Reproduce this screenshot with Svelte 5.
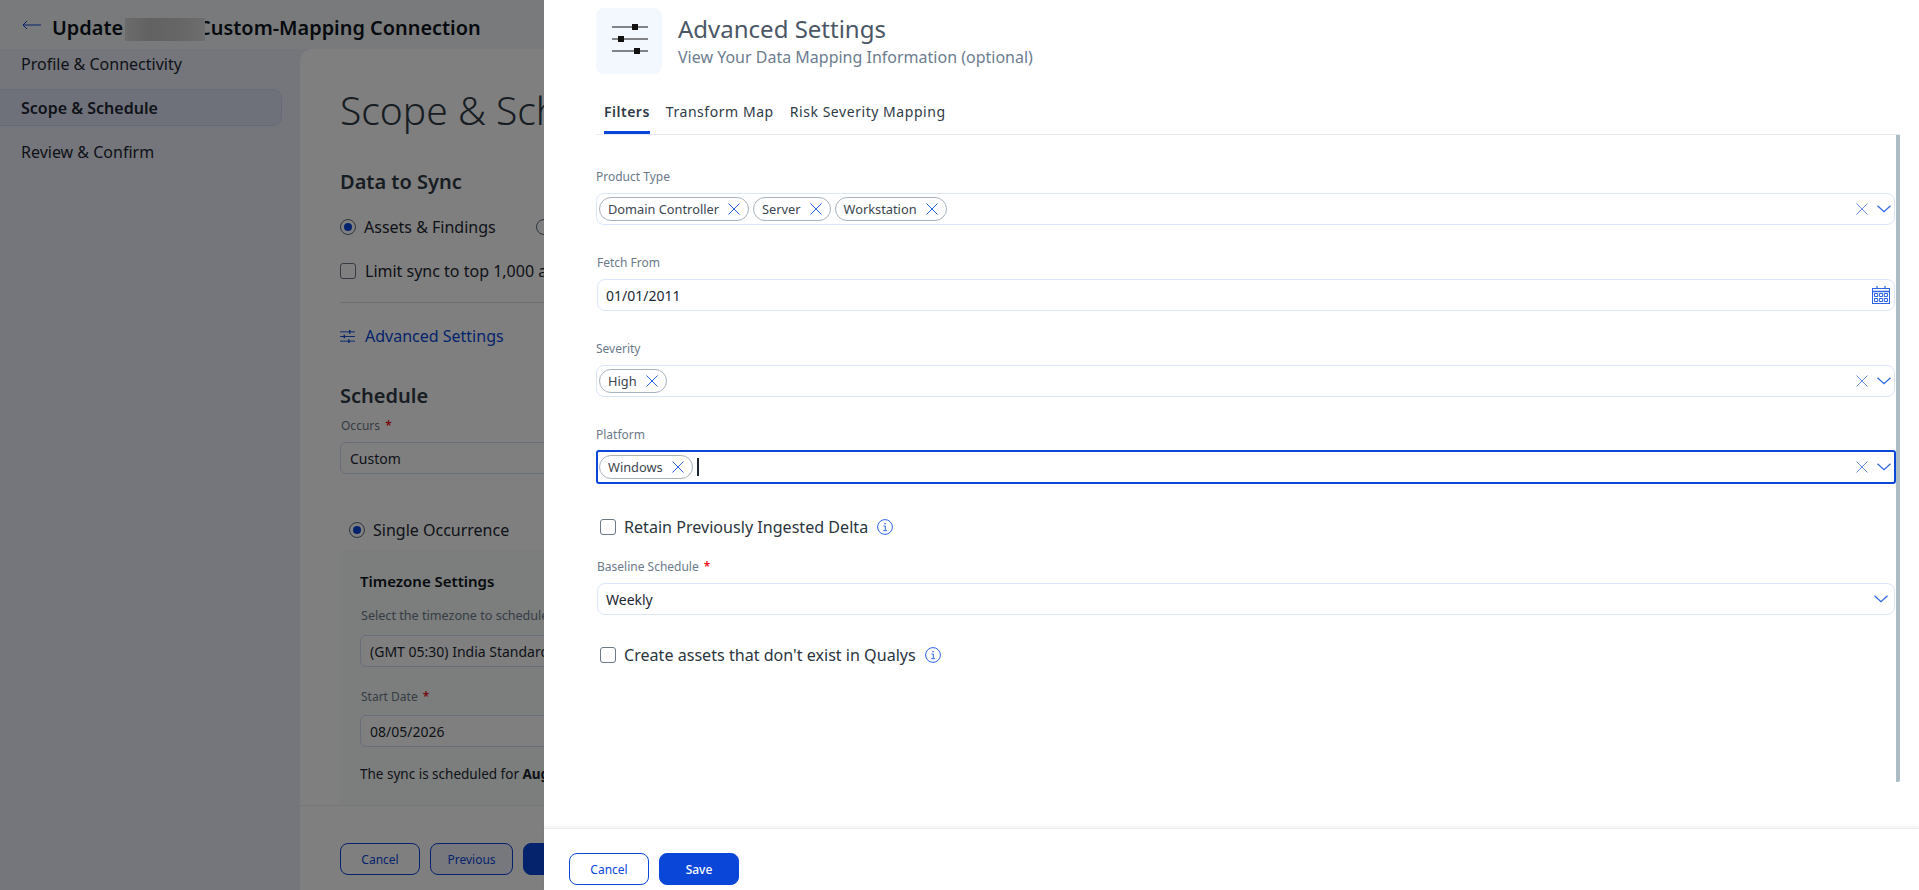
<script>
  const steps = [
    { label: "Profile & Connectivity" },
    { label: "Scope & Schedule", active: true },
    { label: "Review & Confirm" },
  ];
  const tabs = ["Filters", "Transform Map", "Risk Severity Mapping"];
</script>

{#snippet cross(cls = "")}
  <svg class="x {cls}" viewBox="0 0 12 12" width="12" height="12" fill="none" stroke="currentColor" stroke-width="1"><path d="M.5.5l11 11M11.5.5l-11 11" /></svg>
{/snippet}

{#snippet chevron()}
  <svg class="chev" viewBox="0 0 14 8" width="14" height="8" fill="none" stroke="currentColor" stroke-width="1.2"><path d="M.5.8L7 6.8 13.500.8" /></svg>
{/snippet}

{#snippet info()}
  <svg class="info" viewBox="0 0 16 16" width="16" height="16" fill="none" stroke="currentColor"><circle cx="8" cy="8" r="7.400" /><path d="M6.500 7h1.800v4.500M6.300 11.700h3.800" /><circle cx="8" cy="4.700" r=".8" fill="currentColor" stroke="none" /></svg>
{/snippet}

{#snippet chip(text)}
  <span class="chip">{text}{@render cross()}</span>
{/snippet}

{#snippet tools()}
  <span class="tools">{@render cross("clear")}{@render chevron()}</span>
{/snippet}

<div class="page">
  <header>
    <svg class="back" viewBox="0 0 20 12" width="20" height="12" fill="none" stroke="currentColor" stroke-width="1"><path d="M19 6H1M5 2L1 6l4 4" /></svg>
    <h1>Update<span class="redacted"></span>Custom-Mapping Connection</h1>
  </header>

  <div class="body">
    <aside>
      {#each steps as s}
        <div class="step" class:active={s.active}>{s.label}</div>
      {/each}
    </aside>

    <main>
      <div class="scroll">
        <h2>Scope &amp; Schedule</h2>
        <h3>Data to Sync</h3>
        <div class="options">
          <label class="radio"><span class="dot on"></span>Assets &amp; Findings</label>
          <label class="radio"><span class="dot"></span>Assets Only</label>
        </div>
        <label class="limit"><span class="box"></span>Limit sync to top 1,000 assets</label>
        <hr />
        <div class="adv">
          <svg viewBox="0 0 16 14" width="15" height="13" fill="none" stroke="currentColor"><path d="M0 2h16M0 7h16M0 12h16" /><path d="M10.500 0v4M4.500 5v4M9.500 10v4" stroke-width="1.500" /></svg>
          Advanced Settings
        </div>
        <h3 class="sched">Schedule</h3>
        <div class="mini occurs">Occurs <b>*</b></div>
        <div class="field">Custom</div>
        <label class="radio single"><span class="dot on"></span>Single Occurrence</label>
        <section class="tz">
          <h4>Timezone Settings</h4>
          <div class="mini hint">Select the timezone to schedule the sync</div>
          <div class="field">(GMT 05:30) India Standard Time</div>
          <div class="mini start">Start Date <b>*</b></div>
          <div class="field">08/05/2026</div>
          <p>The sync is scheduled for <strong>August 5, 2026</strong></p>
        </section>
      </div>
      <footer>
        <button class="ghost">Cancel</button>
        <button class="ghost tint">Previous</button>
        <button class="solid">Next</button>
      </footer>
    </main>
  </div>

  <div class="backdrop"></div>

  <div class="drawer">
    <div class="head">
      <div class="tile">
        <svg viewBox="0 0 36 30" width="36" height="30" fill="#111" stroke="none"><path d="M0 2.400h36v1.200H0zM0 14.400h36v1.200H0zM0 26.400h36v1.200H0z" /><rect x="20" y="0" width="6" height="6" /><rect x="6" y="12" width="6" height="6" /><rect x="22" y="24" width="6" height="6" /></svg>
      </div>
      <div>
        <div class="title">Advanced Settings</div>
        <div class="sub">View Your Data Mapping Information (optional)</div>
      </div>
    </div>

    <nav>
      {#each tabs as t, i}
        <span class="tab" class:current={i === 0}>{t}</span>
      {/each}
    </nav>

    <div class="form">
      <div class="lab">Product Type</div>
      <div class="input multi">
        {@render chip("Domain Controller")}
        {@render chip("Server")}
        {@render chip("Workstation")}
        {@render tools()}
      </div>

      <div class="lab shift">Fetch From</div>
      <div class="input plain shift">
        01/01/2011
        <svg class="cal" viewBox="0 0 18 18" width="18" height="18" fill="none" stroke="currentColor"><rect x=".5" y="2.500" width="17" height="15" /><path d="M0 5.500h18" stroke-width="1.500" /><path d="M5 0v2.500M13 0v2.500" opacity=".6" stroke-width="2" /><path d="M2.500 7.500h3.200v3h-3.200zM7.400 7.500h3.200v3H7.400zM12.300 7.500h3.200v3h-3.200zM2.500 12.500h3.200v3h-3.200zM7.400 12.500h3.200v3H7.400zM12.300 12.500h3.200v3h-3.200z" /></svg>
      </div>

      <div class="lab">Severity</div>
      <div class="input multi">
        {@render chip("High")}
        {@render tools()}
      </div>

      <div class="lab">Platform</div>
      <div class="input multi focus">
        {@render chip("Windows")}
        <span class="caret"></span>
        {@render tools()}
      </div>

      <div class="check first">
        <span class="box"></span>Retain Previously Ingested Delta {@render info()}
      </div>

      <div class="lab shift base">Baseline Schedule <b>*</b></div>
      <div class="input plain shift">
        Weekly
        {@render chevron()}
      </div>

      <div class="check last">
        <span class="box"></span>Create assets that don't exist in Qualys {@render info()}
      </div>
    </div>

    <div class="actions">
      <button class="ghost">Cancel</button>
      <button class="solid">Save</button>
    </div>
  </div>
</div>

<style>
  :global(body) {
    margin: 0;
    font-family: "Noto Sans", sans-serif;
    color: #1c2733;
  }
  .page {
    position: relative;
    height: 890px;
    overflow: hidden;
    display: flex;
    flex-direction: column;
    background: #e9ecf6;
  }
  header {
    height: 49px;
    box-sizing: border-box;
    padding: 5px 0 0 22px;
    display: flex;
    align-items: center;
    gap: 10px;
    background: #f3f5f8;
    flex: none;
  }
  .back {
    color: #0a47d9;
    margin-top: -5px;
  }
  h1 {
    margin: 0;
    font-size: 19.900px;
    font-weight: 600;
    color: #0c1520;
    white-space: nowrap;
  }
  .redacted {
    display: inline-block;
    width: 80px;
    height: 23px;
    margin: 0 -7px 0 2px;
    vertical-align: -6px;
    position: relative;
    background: linear-gradient(90deg, #d8d8d8, #c4c4c4 30%, #cdcdcd 70%, #dcdcdc);
  }
  .body {
    flex: 1;
    display: flex;
    min-height: 0;
  }
  aside {
    width: 300px;
    flex: none;
    box-sizing: border-box;
    padding: 0 18px 0 0;
  }
  .step {
    height: 30px;
    line-height: 30px;
    padding-left: 21px;
    font-size: 16px;
  }
  .step:first-child {
    height: 40px;
  }
  .step.active {
    height: 37px;
    font-weight: 600;
    line-height: 36px;
    background: #dde2f2;
    border: 1px solid #d0d7ee;
    border-left: 0;
    border-radius: 0 9px 9px 0;
    box-sizing: border-box;
    margin-bottom: 11px;
  }
  main {
    flex: 1;
    background: #fff;
    border-radius: 12px 0 0 0;
    display: flex;
    flex-direction: column;
    min-width: 0;
  }
  .scroll {
    flex: 1;
    min-height: 0;
    overflow: hidden;
    padding-left: 40px;
  }
  h2 {
    margin: 32px 0 0;
    font-size: 39px;
    line-height: 58px;
    font-weight: 300;
    color: #2f3b47;
    white-space: nowrap;
  }
  h3 {
    margin: 30px 0 0;
    font-size: 20px;
    line-height: 25px;
    font-weight: 600;
    color: #2f3b47;
  }
  .options {
    display: flex;
    gap: 40px;
    margin-top: 23px;
  }
  .radio {
    display: flex;
    align-items: center;
    gap: 8px;
    font-size: 16px;
    line-height: 20px;
  }
  .dot {
    width: 16px;
    height: 16px;
    border: 1px solid #5c6b7a;
    border-radius: 50%;
    box-sizing: border-box;
    background: #fff;
    position: relative;
    flex: none;
  }
  .dot.on::after {
    content: "";
    position: absolute;
    inset: 3px;
    border-radius: 50%;
    background: #0a47d9;
  }
  .limit {
    display: flex;
    align-items: center;
    gap: 9px;
    font-size: 16px;
    line-height: 20px;
    margin-top: 24px;
  }
  .box {
    width: 16px;
    height: 16px;
    box-sizing: border-box;
    border: 1px solid #6c7985;
    border-radius: 3px;
    background: #fff;
    flex: none;
  }
  hr {
    margin: 21px 0 0;
    border: 0;
    border-top: 1px solid #d8dce2;
  }
  .adv {
    display: flex;
    align-items: center;
    gap: 10px;
    color: #0a47d9;
    font-size: 16px;
    line-height: 20px;
    margin-top: 23px;
  }
  .sched {
    margin-top: 37px;
  }
  .mini {
    font-size: 12px;
    line-height: 16px;
    color: #6b7a8a;
  }
  .mini b,
  .base b {
    color: #f01010;
    font-weight: 600;
    margin-left: 2px;
  }
  .occurs {
    margin: 10px 0 0 1px;
  }
  .hint {
    font-size: 12.600px;
    margin-left: 1px;
  }
  .field {
    height: 32px;
    box-sizing: border-box;
    border: 1px solid #d3dcf6;
    border-radius: 6px;
    background: #fff;
    padding-left: 9px;
    font-size: 14px;
    line-height: 31px;
    margin-top: 8px;
  }
  .tz .field {
    margin-top: 11px;
  }
  .tz .start + .field {
    margin-top: 10px;
  }
  .single {
    margin: 46px 0 0 9px;
  }
  .tz {
    margin-top: 10px;
    padding: 21px 20px 0;
    background: #f8fbfa;
    height: 260px;
    box-sizing: border-box;
  }
  h4 {
    margin: 0 0 17px;
    font-size: 15px;
    line-height: 20px;
    font-weight: 600;
    color: #0c1520;
  }
  .start {
    margin-top: 22px;
    margin-left: 1px;
  }
  .tz p {
    margin: 18px 0 0;
    font-size: 13.500px;
    line-height: 18px;
    white-space: nowrap;
  }
  main footer {
    height: 85px;
    flex: none;
    box-sizing: border-box;
    padding: 37px 0 0 40px;
    display: flex;
    gap: 10px;
    align-items: flex-start;
    background: #fff;
    border-top: 1px solid #eceef0;
  }
  button {
    height: 32px;
    border-radius: 8px;
    font: 400 12px "Noto Sans", sans-serif;
    padding: 0;
    width: 80px;
    box-sizing: border-box;
  }
  .ghost {
    background: #fff;
    color: #0a47d9;
    border: 1px solid #0a47d9;
  }
  .ghost.tint {
    background: #eef1fb;
    width: 83px;
  }
  .solid {
    background: #0a47d9;
    color: #fff;
    border: 1px solid #0a47d9;
    font-weight: 500;
  }
  .backdrop {
    position: absolute;
    inset: 0;
    background: rgba(0, 0, 0, 0.5);
  }
  .drawer {
    position: absolute;
    top: 0;
    right: 0;
    bottom: 0;
    width: 1375px;
    background: #fff;
    display: flex;
    flex-direction: column;
    box-sizing: border-box;
    padding-left: 52px;
  }
  .head {
    display: flex;
    gap: 16px;
    padding-top: 8px;
    height: 66px;
    flex: none;
  }
  .tile {
    width: 66px;
    height: 66px;
    border-radius: 8px;
    background: #f3f7fe;
    display: flex;
    align-items: center;
    justify-content: center;
  }
  .tile svg {
    margin: 0 0 4px 2px;
  }
  .title {
    font-size: 24px;
    line-height: 32px;
    margin-top: 5px;
    color: #4b5767;
  }
  .sub {
    font-size: 16px;
    line-height: 20px;
    margin-top: 2px;
    color: #6d7d8f;
  }
  nav {
    margin-top: 24px;
    height: 37px;
    width: 1304px;
    box-sizing: border-box;
    border-bottom: 1px solid #e6e9ee;
    display: flex;
    gap: 16px;
    padding-left: 8px;
    flex: none;
  }
  .tab {
    height: 36px;
    box-sizing: border-box;
    font-size: 14px;
    line-height: 28px;
    letter-spacing: 0.55px;
    color: #2f3b47;
  }
  .tab.current {
    font-weight: 600;
    letter-spacing: 0.5px;
    border-bottom: 3px solid #0a47d9;
  }
  .form {
    flex: 1;
    min-height: 0;
    width: 1304px;
    box-sizing: border-box;
    border-right: 4px solid #aebcc6;
    border-radius: 0 0 2px 0;
    padding: 34px 1px 0 0;
    margin-bottom: 46px;
  }
  .lab {
    font-size: 12px;
    line-height: 16px;
    color: #6b7a8a;
    margin-bottom: 8px;
  }
  .shift {
    margin-left: 1px;
  }
  .input {
    height: 32px;
    box-sizing: border-box;
    border: 1px solid #dbe5fb;
    border-radius: 8px;
    background: #fff;
    display: flex;
    align-items: center;
    margin-bottom: 30px;
    color: #1c2733;
    font-size: 14px;
  }
  .multi {
    gap: 4px;
    padding-left: 2px;
  }
  .plain {
    padding-left: 8px;
    justify-content: space-between;
    padding-right: 6px;
    margin-bottom: 0;
  }
  .plain + .lab {
    margin-top: 30px;
  }
  .chip {
    height: 24px;
    box-sizing: border-box;
    border: 1px solid #a9b2bd;
    border-radius: 12px;
    display: inline-flex;
    align-items: center;
    gap: 9px;
    padding: 0 8px 0 8px;
    font-size: 12.800px;
    color: #3b4650;
  }
  .x,
  .chev,
  .info,
  .cal {
    color: #2a63e4;
    flex: none;
  }
  .cal {
    margin-right: -2px;
  }
  .tools {
    margin-left: auto;
    display: flex;
    align-items: center;
    gap: 9px;
    padding-right: 3px;
  }
  .clear {
    opacity: 0.7;
  }
  .focus {
    height: 34px;
    border: 2px solid #0a47d9;
    border-radius: 3px;
    padding-left: 1px;
    margin: -1px -1px 1px 0;
  }
  .focus .tools {
    padding-right: 3px;
  }
  .caret {
    width: 2px;
    height: 18px;
    background: #1c2733;
  }
  .check {
    display: flex;
    align-items: center;
    gap: 8px;
    font-size: 16.100px;
    line-height: 22px;
    margin-left: 4px;
    color: #2b3640;
  }
  .check .info {
    margin-left: 1px;
  }
  .first {
    margin-top: 32px;
  }
  .base {
    margin-top: 21px;
  }
  .last {
    margin-top: 29px;
  }
  .actions {
    height: 62px;
    flex: none;
    margin-left: -52px;
    padding: 24px 0 0 25px;
    box-sizing: border-box;
    display: flex;
    gap: 10px;
    align-items: flex-start;
    border-top: 1px solid #ececec;
    box-shadow: 0 -2px 3px rgba(0, 0, 0, 0.05);
    background: #fff;
  }
</style>
